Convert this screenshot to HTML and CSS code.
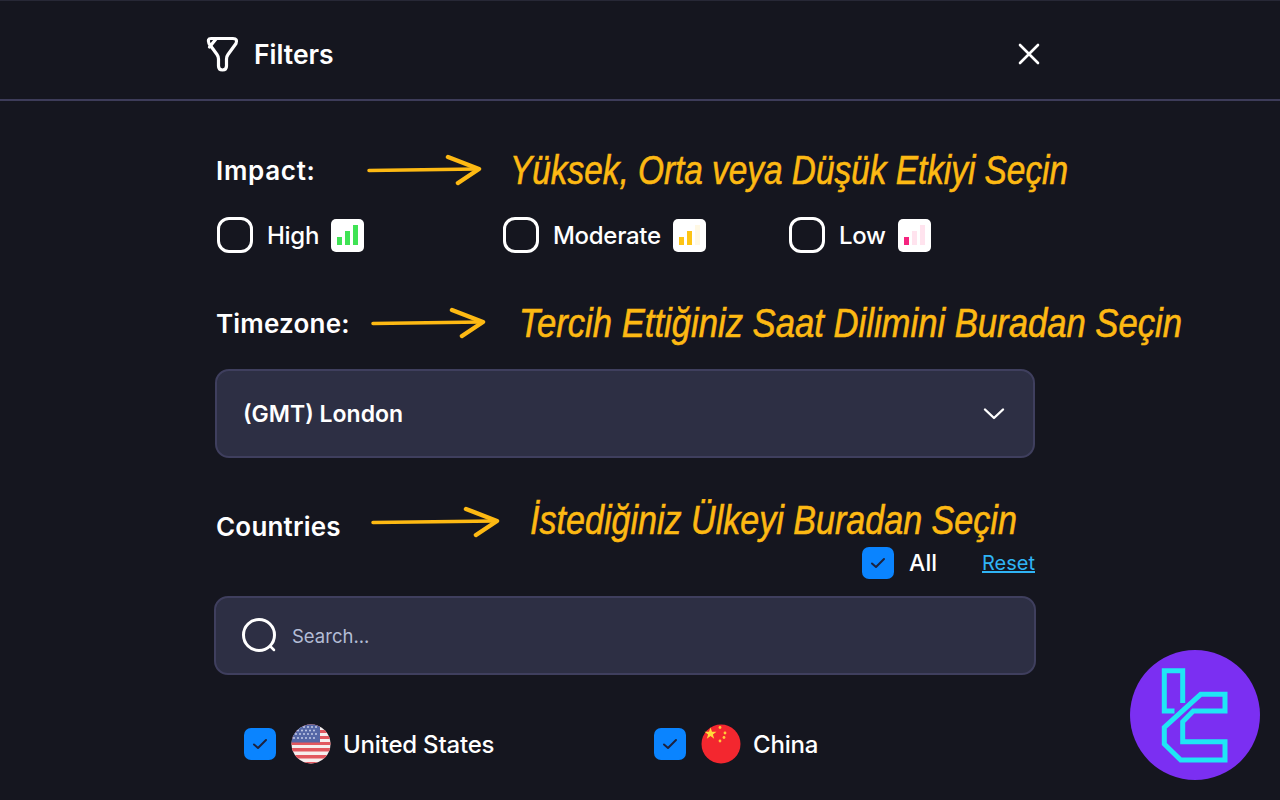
FILE: index.html
```html
<!DOCTYPE html>
<html lang="en">
<head>
    <meta charset="UTF-8">
    <meta name="viewport" content="width=device-width, initial-scale=1.0">
    <title>Filters</title>
    <link rel="stylesheet" href="styles.css">
</head>
<body>
    <header class="filters-header">
        <div class="filters-title">
            <svg class="funnel-icon" width="34" height="36" viewBox="0 0 34 36" fill="none" stroke="#fff" stroke-width="3.200" stroke-linejoin="round" stroke-linecap="round">
                <path d="M6 2.500H28Q33 2.500 31 7.500L23 18.500Q21.500 20.500 21.500 23V30Q21.500 34 17.500 34Q13.500 34 13.500 30V23Q13.500 20.500 12 18.500L4 7.500Q2 2.500 6 2.500Z"/>
                <path d="M11 3L4.500 11"/>
            </svg>
            <span>Filters</span>
        </div>
        <svg class="close-icon" width="22" height="22" viewBox="0 0 22 22" fill="none" stroke="#fff" stroke-width="2.600" stroke-linecap="round">
            <path d="M2 2L20 20M20 2L2 20"/>
        </svg>
    </header>

    <main class="filters-body">
        <div class="label-row impact-row">
            <span class="section-label">Impact:</span>
            <svg class="arrow" width="116" height="32" viewBox="0 0 116 32" fill="none" stroke="#fdb913" stroke-linecap="round" stroke-linejoin="round">
                <path d="M2 16.500L110 15" stroke-width="3.500"/>
                <path d="M81 3L112 15L91 29" stroke-width="4.500"/>
            </svg>
            <span class="note note-impact">Yüksek, Orta veya Düşük Etkiyi Seçin</span>
        </div>

        <div class="impact-options">
            <label class="impact-option">
                <span class="box"></span>
                <span class="option-text">High</span>
                <span class="bars bars-high"><i></i><i></i><i></i></span>
            </label>
            <label class="impact-option">
                <span class="box"></span>
                <span class="option-text">Moderate</span>
                <span class="bars bars-moderate"><i></i><i></i><i></i></span>
            </label>
            <label class="impact-option">
                <span class="box"></span>
                <span class="option-text">Low</span>
                <span class="bars bars-low"><i></i><i></i><i></i></span>
            </label>
        </div>

        <div class="label-row timezone-row">
            <span class="section-label">Timezone:</span>
            <svg class="arrow" width="116" height="32" viewBox="0 0 116 32" fill="none" stroke="#fdb913" stroke-linecap="round" stroke-linejoin="round">
                <path d="M2 16.500L110 15" stroke-width="3.500"/>
                <path d="M81 3L112 15L91 29" stroke-width="4.500"/>
            </svg>
            <span class="note note-timezone">Tercih Ettiğiniz Saat Dilimini Buradan Seçin</span>
        </div>

        <div class="select-box">
            <span>(GMT) London</span>
            <svg width="22" height="14" viewBox="0 0 22 14" fill="none" stroke="#fff" stroke-width="2.400" stroke-linecap="round" stroke-linejoin="round">
                <path d="M2 2.500L11 11L20 2.500"/>
            </svg>
        </div>

        <div class="label-row countries-row">
            <span class="section-label">Countries</span>
            <svg class="arrow" width="130" height="32" viewBox="0 0 130 32" fill="none" stroke="#fdb913" stroke-linecap="round" stroke-linejoin="round">
                <path d="M2 16.500L124 15" stroke-width="3.500"/>
                <path d="M95 3L126 15L105 29" stroke-width="4.500"/>
            </svg>
            <span class="note note-countries">İstediğiniz Ülkeyi Buradan Seçin</span>
        </div>

        <div class="all-row">
            <span class="check">
                <svg width="16" height="12" viewBox="0 0 16 12" fill="none" stroke="#1c2340" stroke-width="2" stroke-linecap="round" stroke-linejoin="round"><path d="M2 6.500L6 10L14 2"/></svg>
            </span>
            <span class="all-text">All</span>
            <a class="reset-link" href="#">Reset</a>
        </div>

        <div class="search-box">
            <svg width="38" height="38" viewBox="0 0 38 38" fill="none" stroke="#fff" stroke-linecap="round">
                <circle cx="18" cy="18" r="15.500" stroke-width="3"/>
                <path d="M30 30L33 33" stroke-width="2.500"/>
            </svg>
            <span class="search-text">Search...</span>
        </div>

        <div class="country-list">
            <div class="country">
                <span class="check">
                    <svg width="16" height="12" viewBox="0 0 16 12" fill="none" stroke="#1c2340" stroke-width="2" stroke-linecap="round" stroke-linejoin="round"><path d="M2 6.500L6 10L14 2"/></svg>
                </span>
                <svg class="flag" width="40" height="40" viewBox="0 0 40 40">
                    <defs><clipPath id="us-clip"><circle cx="20" cy="20" r="19.500"/></clipPath></defs>
                    <g clip-path="url(#us-clip)">
                        <rect width="40" height="40" fill="#f6eeee"/>
                        <path d="M0 0H40V3H0ZM0 6H40V9H0ZM0 12H40V15H0ZM0 18H40V21H0ZM0 24H40V27.500H0ZM0 31H40V34.500H0ZM0 38H40V40H0Z" fill="#e2575f"/>
                        <rect width="29" height="18.500" fill="#5567a6"/>
                        <g fill="#cfd6ee">
                            <circle cx="13" cy="3" r=".9"/><circle cx="17" cy="3" r=".9"/><circle cx="21" cy="3" r=".9"/><circle cx="25" cy="3" r=".9"/>
                            <circle cx="7" cy="6.500" r=".9"/><circle cx="11" cy="6.500" r=".9"/><circle cx="15" cy="6.500" r=".9"/><circle cx="19" cy="6.500" r=".9"/><circle cx="23" cy="6.500" r=".9"/>
                            <circle cx="5" cy="10" r=".9"/><circle cx="9" cy="10" r=".9"/><circle cx="13" cy="10" r=".9"/><circle cx="17" cy="10" r=".9"/><circle cx="21" cy="10" r=".9"/><circle cx="25" cy="10" r=".9"/>
                            <circle cx="3" cy="14" r=".9"/><circle cx="7" cy="14" r=".9"/><circle cx="11" cy="14" r=".9"/><circle cx="15" cy="14" r=".9"/><circle cx="19" cy="14" r=".9"/><circle cx="23" cy="14" r=".9"/>
                        </g>
                    </g>
                </svg>
                <span class="country-name">United States</span>
            </div>
            <div class="country">
                <span class="check">
                    <svg width="16" height="12" viewBox="0 0 16 12" fill="none" stroke="#1c2340" stroke-width="2" stroke-linecap="round" stroke-linejoin="round"><path d="M2 6.500L6 10L14 2"/></svg>
                </span>
                <svg class="flag" width="40" height="40" viewBox="0 0 40 40">
                    <circle cx="20" cy="20" r="19.500" fill="#f3272f"/>
                    <path d="M9.500 3.500L11 7.700H15.500L11.900 10.400L13.200 14.700L9.500 12.100L5.800 14.700L7.100 10.400L3.500 7.700H8Z" fill="#ffdc3a"/>
                    <g fill="#ffc93a">
                        <circle cx="19" cy="3.500" r="1.400"/><circle cx="24" cy="9" r="1.400"/>
                        <circle cx="23" cy="13.500" r="1.400"/><circle cx="19" cy="17" r="1.400"/>
                    </g>
                </svg>
                <span class="country-name">China</span>
            </div>
        </div>
    </main>

    <div class="brand-badge">
        <svg width="130" height="130" viewBox="0 0 130 130" fill="none" stroke="#1fe6f5" stroke-width="5" stroke-linejoin="miter">
            <path d="M52.700 53V20.700H34.300V61H44.500"/>
            <path d="M70.700 44.300H95V61H63.300L52.700 71.700V91.700H95V110H50.700L34.300 94V77.300Z"/>
        </svg>
    </div>
</body>
</html>
```

FILE: styles.css
```css
body {
    margin: 0;
    height: 800px;
    overflow: hidden;
    background-color: #15161f;
    color: #fff;
    font-family: 'Inter', 'Noto Sans', sans-serif;
    border-top: 1px solid #272836;
    box-sizing: border-box;
}

svg {
    display: block;
    flex-shrink: 0;
}

.filters-header {
    height: 100px;
    box-sizing: border-box;
    border-bottom: 2px solid #3d3c59;
    display: flex;
    align-items: center;
    justify-content: space-between;
    padding: 8px 240px 0 205px;
}

.filters-title {
    display: flex;
    align-items: center;
    gap: 15px;
    font-size: 26.500px;
    font-weight: 600;
}

.filters-body {
    width: 822px;
    margin-left: 214px;
}

.label-row {
    display: flex;
    align-items: center;
    height: 44px;
}

.section-label {
    flex-shrink: 0;
    width: 155px;
    margin-left: 2px;
    font-size: 26px;
    font-weight: 600;
    letter-spacing: 0.2px;
    white-space: nowrap;
}

.note {
    color: #fdb913;
    font-family: 'Liberation Sans', sans-serif;
    font-style: italic;
    font-size: 40px;
    white-space: nowrap;
    transform-origin: left center;
    -webkit-text-stroke: 0.6px #fdb913;
}

.impact-row {
    margin-top: 47px;
}

.impact-row .section-label {
    width: 151px;
    letter-spacing: 0.7px;
}

.note-impact {
    margin-left: 27px;
    transform: scaleX(0.834);
}

.impact-options {
    display: flex;
    margin-top: 25px;
    margin-left: 3px;
}

.impact-option {
    display: flex;
    align-items: center;
    flex-shrink: 0;
    width: 286px;
}

.box {
    width: 36px;
    height: 36px;
    box-sizing: border-box;
    border: 3px solid #fff;
    border-radius: 12px;
}

.option-text {
    font-size: 24px;
    font-weight: 500;
    letter-spacing: -0.3px;
    margin-left: 14px;
    margin-right: 12px;
}

.bars {
    width: 33px;
    height: 33px;
    box-sizing: border-box;
    padding: 6px 6px 7px;
    background: #fff;
    border-radius: 5px;
    display: flex;
    align-items: flex-end;
    gap: 3px;
}

.bars i {
    flex: 1;
    display: block;
}

.bars i:nth-child(1) { height: 8px; }
.bars i:nth-child(2) { height: 14px; }
.bars i:nth-child(3) { height: 20px; }

.bars-high i { background: #3fe354; }
.bars-moderate i { background: #fdc414; }
.bars-moderate i:nth-child(3) { background: #fff8e3; }
.bars-low i { background: #ffe3ee; }
.bars-low i:nth-child(1) { background: #f5247f; }

.timezone-row {
    margin-top: 48px;
}

.note-timezone {
    margin-left: 32px;
    transform: scaleX(0.866);
}

.select-box {
    margin-top: 24px;
    margin-left: 1px;
    width: 820px;
    height: 89px;
    box-sizing: border-box;
    background: #2d2f44;
    border: 2px solid #3f3f5e;
    border-radius: 14px;
    display: flex;
    align-items: center;
    justify-content: space-between;
    padding: 0 28px 0 26px;
    font-size: 23px;
    font-weight: 600;
}

.countries-row {
    height: 40px;
    margin-top: 48px;
}

.countries-row .arrow {
    margin-bottom: 8px;
}

.note-countries {
    margin-left: 29px;
    margin-bottom: 12px;
    transform: scaleX(0.852);
}

.all-row {
    display: flex;
    align-items: center;
    justify-content: flex-end;
    height: 32px;
    margin-top: 1px;
    padding-right: 1px;
}

.check {
    flex-shrink: 0;
    width: 32px;
    height: 32px;
    background: #0a84ff;
    border-radius: 7px;
    display: flex;
    align-items: center;
    justify-content: center;
}

.all-text {
    font-size: 23px;
    font-weight: 500;
    margin-left: 15px;
    margin-right: 45px;
}

.reset-link {
    color: #2fb4f5;
    font-size: 20px;
}

.search-box {
    margin-top: 17px;
    height: 79px;
    box-sizing: border-box;
    background: #2d2f44;
    border: 2px solid #3f3f5e;
    border-radius: 14px;
    display: flex;
    align-items: center;
    padding-left: 25px;
}

.search-text {
    color: #b4bdd6;
    font-size: 18.500px;
    margin-left: 13px;
}

.country-list {
    display: flex;
    margin-top: 49px;
    margin-left: 30px;
}

.country {
    display: flex;
    align-items: center;
    flex-shrink: 0;
    width: 410px;
}

.flag {
    margin-left: 15px;
}

.country-name {
    font-size: 24px;
    font-weight: 500;
    letter-spacing: -0.2px;
    margin-left: 12px;
}

.brand-badge {
    position: absolute;
    left: 1130px;
    top: 650px;
    width: 130px;
    height: 130px;
    border-radius: 50%;
    background: #7b2ff2;
}
```
